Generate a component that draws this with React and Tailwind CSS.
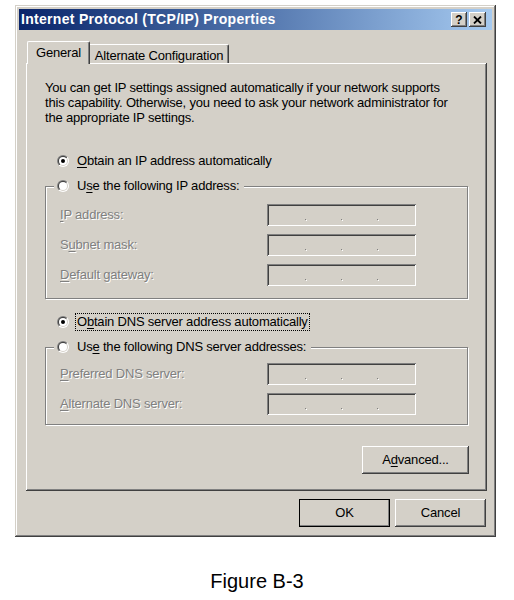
import React from 'react';

// Classic Windows 2000 dialog: Internet Protocol (TCP/IP) Properties
const raised =
  'shadow-[inset_-1px_-1px_0_#404040,inset_1px_1px_0_#fff,inset_-2px_-2px_0_#808080]';
const sunken =
  'shadow-[inset_1px_1px_0_#808080,inset_-1px_-1px_0_#fff,inset_2px_2px_0_#404040,inset_-2px_-2px_0_#d4d0c8]';
const disabled = 'text-[#808080] [text-shadow:1px_1px_0_#fff]';

const Radio = ({ checked, id }) => (
  <svg width="12" height="12" viewBox="0 0 12 12" className="shrink-0">
    <defs>
      <linearGradient id={`o${id}`} x1="0" y1="0" x2="1" y2="1">
        <stop offset="0.5" stopColor="#808080" />
        <stop offset="0.5" stopColor="#ffffff" />
      </linearGradient>
      <linearGradient id={`i${id}`} x1="0" y1="0" x2="1" y2="1">
        <stop offset="0.5" stopColor="#404040" />
        <stop offset="0.5" stopColor="#d4d0c8" />
      </linearGradient>
    </defs>
    <circle cx="6" cy="6" r="6" fill={`url(#o${id})`} />
    <circle cx="6" cy="6" r="5" fill={`url(#i${id})`} />
    <circle cx="6" cy="6" r="4" fill="#fff" />
    {checked && <circle cx="6" cy="6" r="2" fill="#000" />}
  </svg>
);

const U = ({ children }) => <span className="underline underline-offset-2">{children}</span>;

const RadioRow = ({ checked, id, focus, children }) => (
  <div className="flex items-center h-[16px]">
    <Radio checked={checked} id={id} />
    <span
      className={`ml-[6px] px-[1px] leading-[16px] border ${
        focus ? 'border-dotted border-black' : 'border-transparent'
      }`}
    >
      {children}
    </span>
  </div>
);

const IpBox = () => (
  <div className={`w-[149px] h-[22px] bg-[#d4d0c8] ${sunken} flex items-end pb-[6px] pl-[38px] gap-[35px]`}>
    {[0, 1, 2].map((i) => (
      <span key={i} className="w-[1px] h-[1px] bg-[#808080] shadow-[1px_1px_0_#fff]" />
    ))}
  </div>
);

const FieldRow = ({ label }) => (
  <div className="flex items-center">
    <div className={`w-[207px] ${disabled}`}>{label}</div>
    <IpBox />
  </div>
);

const GroupBox = ({ legend, children, className }) => (
  <div
    className={`border border-[#808080] shadow-[inset_1px_1px_0_#fff,1px_1px_0_#fff] ${className}`}
  >
    <div className="-mt-[9px] ml-[8px] w-fit bg-[#d4d0c8] pl-[3px] pr-[3px]">{legend}</div>
    {children}
  </div>
);

const Button = ({ children, isDefault, className }) => (
  <div
    className={`flex items-center justify-center bg-[#d4d0c8] ${raised} ${
      isDefault ? 'outline outline-1 outline-black -outline-offset-1' : ''
    } ${className}`}
  >
    {children}
  </div>
);

export default function App() {
  return (
    <div
      className="w-[514px] h-[600px] bg-white overflow-hidden text-black"
      style={{ fontFamily: '"Liberation Sans", Arial, sans-serif' }}
    >
      {/* Window */}
      <div
        className={`ml-[15px] mt-[5px] w-[481px] h-[532px] bg-[#d4d0c8] p-[4px] flex flex-col shadow-[inset_-1px_-1px_0_#404040,inset_1px_1px_0_#d4d0c8,inset_-2px_-2px_0_#808080,inset_2px_2px_0_#fff]`}
      >
        {/* Title bar */}
        <div className="h-[21px] flex items-center justify-between bg-gradient-to-r from-[#0a246a] to-[#a6caf0] pl-[2px] pr-[6px]">
          <span className="text-white font-bold text-[14px] tracking-[0.3px]">
            Internet Protocol (TCP/IP) Properties
          </span>
          <div className="flex gap-[2px]">
            <div className={`w-[16px] h-[15px] bg-[#d4d0c8] ${raised} flex items-center justify-center text-[12px] font-bold leading-none`}>
              ?
            </div>
            <div className={`w-[17px] h-[15px] bg-[#d4d0c8] ${raised} flex items-center justify-center`}>
              <svg width="9" height="8" viewBox="0 0 9 8">
                <path d="M1 0.5 L8 7.5 M8 0.5 L1 7.5" stroke="#000" strokeWidth="1.8" />
              </svg>
            </div>
          </div>
        </div>

        {/* Body */}
        <div className="pl-[7px] pr-[5px] pt-[11px] text-[13px] tracking-[-0.2px]">
          {/* Tabs */}
          <div className="flex items-end h-[22px]">
            <div className="relative z-10 -mb-[1px] h-[23px] ml-[1px] px-[8px] pt-[1px] bg-[#d4d0c8] border-t border-l border-white rounded-tl-[2px] rounded-tr-[2px] shadow-[inset_-1px_0_0_#808080] border-r border-r-[#404040]">
              General
            </div>
            <div className="h-[19px] px-[5px] pt-[1px] border-t border-white border-r border-r-[#404040] shadow-[inset_-1px_0_0_#808080] rounded-tr-[2px]">
              Alternate Configuration
            </div>
          </div>

          {/* Tab page */}
          <div className={`h-[428px] flex flex-col pl-[19px] pr-[19px] pt-[17px] bg-[#d4d0c8] ${raised}`}>
            <p className="leading-[15px]">
              You can get IP settings assigned automatically if your network supports
              <br />
              this capability. Otherwise, you need to ask your network administrator for
              <br />
              the appropriate IP settings.
            </p>

            <div className="mt-[28px] ml-[12px]">
              <RadioRow checked id="a">
                <U>O</U>btain an IP address automatically
              </RadioRow>
            </div>

            <GroupBox
              className="mt-[17px] pb-[12px]"
              legend={
                <RadioRow id="b">
                  U<U>s</U>e the following IP address:
                </RadioRow>
              }
            >
              <div className="mt-[10px] pl-[14px] flex flex-col gap-[8px]">
                <FieldRow label={<><U>I</U>P address:</>} />
                <FieldRow label={<>S<U>u</U>bnet mask:</>} />
                <FieldRow label={<><U>D</U>efault gateway:</>} />
              </div>
            </GroupBox>

            <div className="mt-[15px] ml-[12px]">
              <RadioRow checked focus id="c">
                O<U>b</U>tain DNS server address automatically
              </RadioRow>
            </div>

            <GroupBox
              className="mt-[17px] pb-[9px]"
              legend={
                <RadioRow id="d">
                  Us<U>e</U> the following DNS server addresses:
                </RadioRow>
              }
            >
              <div className="mt-[8px] pl-[14px] flex flex-col gap-[8px]">
                <FieldRow label={<><U>P</U>referred DNS server:</>} />
                <FieldRow label={<><U>A</U>lternate DNS server:</>} />
              </div>
            </GroupBox>

            <div className="mt-[21px] flex justify-end -mr-[1px]">
              <Button className="w-[107px] h-[28px]">
                A<U>d</U>vanced...
              </Button>
            </div>
          </div>

          {/* Dialog buttons */}
          <div className="mt-[8px] flex justify-end gap-[5px] pr-[1px]">
            <Button isDefault className="w-[91px] h-[28px]">OK</Button>
            <Button className="w-[91px] h-[28px]">Cancel</Button>
          </div>
        </div>
      </div>

      <div className="mt-[33px] text-center text-[20px] leading-[22px]">Figure B-3</div>
    </div>
  );
}
